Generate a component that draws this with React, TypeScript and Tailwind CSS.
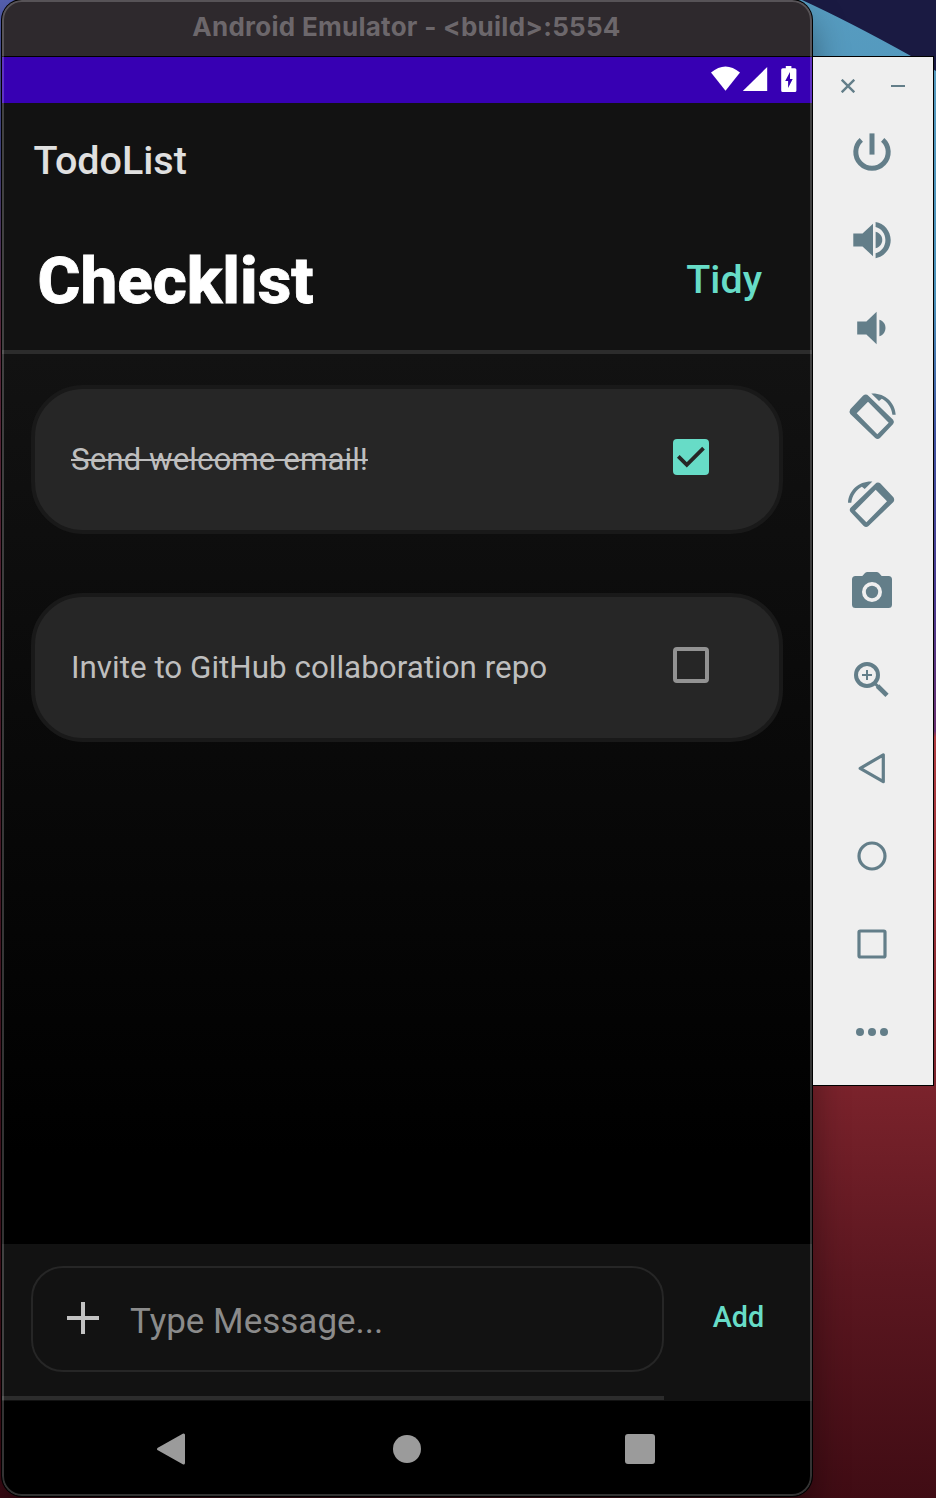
import React from "react";

const ICON = "size-12 overflow-visible";

function Glyph({ children }: { children: React.ReactNode }) {
  return (
    <button className="flex h-[88px] w-full items-center justify-center pr-[2px] text-[#637e89]">
      <svg viewBox="0 0 48 48" className={ICON} fill="currentColor">
        {children}
      </svg>
    </button>
  );
}

function RotateShape() {
  return (
    <>
      <path
        fillRule="evenodd"
        d="M15.2 3.6Q18 1.4 20.6 4L45.1 27.7Q46.8 29.9 45.1 32.1L32 46.1Q29.6 47.8 27.2 46.1L2.3 22Q.7 20 2.3 17.2ZM20 9.7L40.7 30.7L29.3 42.3L8.7 21.3Z"
      />
      <path d="M23.3 1.5C36.5 .8 47 10 47.7 22.7H44.4C43.5 15.5 39.5 9.8 33.8 6.8L31 8.9Z" />
    </>
  );
}

function Toolbar() {
  return (
    <aside className="mt-14 ml-px flex h-[1030px] w-[121px] flex-col border-t border-r border-b border-black bg-[#efefef]">
      <div className="flex h-[51px] shrink-0 items-center gap-9 pt-[7px] pl-7 text-[#637e89]">
        <svg viewBox="0 0 14 14" className="size-3.5" stroke="currentColor" strokeWidth="2.4">
          <path d="M.7.7L13.3 13.3M13.3.7L.7 13.3" />
        </svg>
        <svg viewBox="0 0 14 14" className="size-3.5" stroke="currentColor" strokeWidth="2">
          <path d="M0 7H14" />
        </svg>
      </div>
      <Glyph>
        <path
          d="M13.3 11.8A16.2 16.2 0 1 0 34.7 11.8"
          fill="none"
          stroke="currentColor"
          strokeWidth="5"
        />
        <rect x="21.5" y="5.4" width="5" height="21.2" />
      </Glyph>
      <Glyph>
        <path d="M5.3 17.5H14.5L25 7.8V40.2L14.5 30.6H5.3Z" />
        <path d="M27.6 15.8C36.5 18 36.5 30 27.6 32.3Z" />
        <path d="M27.6 5.9C36 7.2 42.7 14.8 42.7 24S36 40.8 27.6 42.2V37.2C33.5 35.8 37.4 30.5 37.4 24S33.5 12.3 27.6 10.9Z" />
      </Glyph>
      <Glyph>
        <path d="M9.2 17.5H18.4L28.6 7.8V40.2L18.4 30.6H9.2Z" />
        <path d="M31.4 15.8C39.5 18 39.5 30 31.4 32.3Z" />
      </Glyph>
      <Glyph>
        <RotateShape />
      </Glyph>
      <Glyph>
        <g transform="translate(47.7 0) scale(-1 1)">
          <RotateShape />
        </g>
      </Glyph>
      <Glyph>
        <path
          fillRule="evenodd"
          d="M7.5 8H14.3L17 5Q18 4 19.5 4H28.5Q30 4 31 5L33.7 8H40.5Q44 8 44 11.5V36.5Q44 40 40.5 40H7.5Q4 40 4 36.5V11.5Q4 8 7.5 8ZM24 14a10 10 0 1 0 0 20a10 10 0 1 0 0-20Z"
        />
        <circle cx="24" cy="24" r="6.2" />
      </Glyph>
      <Glyph>
        <g fill="none" stroke="currentColor">
          <circle cx="19" cy="19" r="11" strokeWidth="4" />
          <path d="M14 19H24M19 14V24" strokeWidth="2" />
          <path d="M27 27.5L30 30.5" strokeWidth="3" />
          <path d="M29.5 30L39 39.3" strokeWidth="4.6" />
        </g>
      </Glyph>
      <Glyph>
        <path
          d="M12.2 24.3L35.3 10.9V37.7Z"
          fill="none"
          stroke="currentColor"
          strokeWidth="3.2"
          strokeLinejoin="round"
        />
      </Glyph>
      <Glyph>
        <circle cx="24" cy="24" r="13" fill="none" stroke="currentColor" strokeWidth="3.2" />
      </Glyph>
      <Glyph>
        <rect x="11" y="11" width="26" height="26" rx="1.2" fill="none" stroke="currentColor" strokeWidth="3.2" />
      </Glyph>
      <Glyph>
        <circle cx="12" cy="24" r="4" />
        <circle cx="24" cy="24" r="4" />
        <circle cx="36" cy="24" r="4" />
      </Glyph>
    </aside>
  );
}

function Task({ label, done }: { label: string; done?: boolean }) {
  return (
    <li className="flex h-[149px] items-center justify-between rounded-[52px] border-4 border-[#191919] bg-[#262626] pr-[70px] pb-0.5 pl-9">
      <span
        className={
          done
            ? "pt-0.5 text-[31.4px] leading-none text-[#bebebe] line-through decoration-[#bebebe] decoration-2"
            : "pt-0.5 text-[31.4px] leading-none text-[#bebebe]"
        }
      >
        {label}
      </span>
      <svg viewBox="0 0 36 36" className="mb-1 size-9">
        {done ? (
          <>
            <rect width="36" height="36" rx="4" fill="#67dcc7" />
            <path d="M5.3 17.3L13.8 25.8L30.5 9.1" fill="none" stroke="#262626" strokeWidth="3.8" />
          </>
        ) : (
          <rect x="2" y="2" width="32" height="32" rx="2" fill="none" stroke="#929292" strokeWidth="4" />
        )}
      </svg>
    </li>
  );
}

export default function App() {
  return (
    <div className="relative flex h-[1498px] w-[936px] overflow-hidden bg-[#5c1820] font-[Roboto,sans-serif]">
      <svg viewBox="0 0 936 1498" className="absolute inset-0 size-full">
        <defs>
          <linearGradient id="edge" x1="0" y1="0" x2="0" y2="1">
            <stop offset="0" stopColor="#579cc0" />
            <stop offset=".2" stopColor="#4a90b8" />
            <stop offset=".29" stopColor="#4052a0" />
            <stop offset=".4" stopColor="#4a3a90" />
            <stop offset=".488" stopColor="#6a3070" />
            <stop offset=".492" stopColor="#b03c40" />
            <stop offset=".6" stopColor="#9a3238" />
            <stop offset=".72" stopColor="#7c232c" />
            <stop offset=".85" stopColor="#5c1720" />
            <stop offset="1" stopColor="#400c14" />
          </linearGradient>
          <linearGradient id="left" x1="0" y1="0" x2="0" y2="1">
            <stop offset="0" stopColor="#5560b0" />
            <stop offset=".1" stopColor="#4a4c90" />
            <stop offset=".22" stopColor="#6a3048" />
            <stop offset="1" stopColor="#3c0a14" />
          </linearGradient>
        </defs>
        <rect width="936" height="1498" fill="url(#edge)" />
        <rect width="400" height="1498" fill="url(#left)" />
        <path d="M802 0H936V71L911 56Q850 22 802 0Z" fill="#1a1a42" />
      </svg>

      <main className="relative ml-[2px] flex h-[1496px] w-[810px] shrink-0 flex-col overflow-hidden rounded-[20px] bg-black shadow-[0_0_0_1px_#000,0_20px_36px_rgba(0,0,0,0.4)]">
        <header className="flex h-[57px] shrink-0 items-center justify-center border-b border-black bg-[#2e292d] pr-px pb-[3px] font-[Inter,sans-serif] text-[26px] font-bold text-[#6c676b]">
          <span className="tracking-[0.27px]">Android Emulator - &lt;build&gt;:5554</span>
        </header>

        <div className="flex h-[46px] shrink-0 justify-end bg-[#3700b3] pt-[9px] pr-[15px]">
          <svg viewBox="0 0 86 26" className="h-[26px] w-[86px]" fill="#fff">
            <path d="M0 6.5Q14.5-5.7 29 6.5L14.5 24.8Z" />
            <path d="M56.2 1V25H31.8Z" />
            <path
              transform="translate(-.6 0)"
              fillRule="evenodd"
              d="M75.4 0H81V2.3H84.5Q86 2.3 86 3.8V24.5Q86 26 84.5 26H72.3Q70.8 26 70.8 24.5V3.8Q70.8 2.3 72.3 2.3H75.4ZM79.6 6L74.8 15H77.7V22L82.3 12.9H79.6Z"
            />
          </svg>
        </div>

        <div className="flex h-28 shrink-0 items-center bg-[#121212] pt-1 pl-[31.5px] text-[39.5px] font-medium text-[#e0e0e0]">
          TodoList
        </div>
        <div className="flex h-[139px] shrink-0 items-center justify-between border-b-4 border-[#2c2c2c] bg-[#121212] pr-[50px] pb-[3px] pl-[35.5px]">
          <h1 className="text-[65.5px] leading-none font-extrabold text-white [-webkit-text-stroke:0.8px_white]">
            Checklist
          </h1>
          <button className="pb-0.5 text-[39.5px] leading-none font-medium text-[#67dcc7]">Tidy</button>
        </div>

        <ul className="flex h-[890px] shrink-0 flex-col gap-[59px] bg-linear-to-b/srgb from-[#121212] to-black to-90% px-[29px] pt-[31px]">
          <Task label="Send welcome email!" done />
          <Task label="Invite to GitHub collaboration repo" />
        </ul>

        <div className="flex h-[157px] shrink-0 bg-[#121212]">
          <div className="flex h-[156px] w-[662px] flex-col justify-between border-b-4 border-[#2c2c2c] pt-[22px] pb-6 pl-[29px]">
            <div className="flex h-[106px] items-center rounded-[32px] border-2 border-[#262626] pl-[34px]">
              <svg viewBox="0 0 32 32" className="mb-[3px] size-8" stroke="#c2c2c2" strokeWidth="4">
                <path d="M0 16H32M16 0V32" />
              </svg>
              <span className="ml-[31px] pt-[5px] text-[35px] leading-none text-[#8b8b8b]">Type Message...</span>
            </div>
          </div>
          <button className="flex-1 pb-[10px] pl-px text-[28.8px] font-medium text-[#67dcc7]">Add</button>
        </div>

        <nav className="flex h-[95px] items-center bg-black pl-[154px]">
          <svg viewBox="0 0 29 32" className="h-8 w-[29px]">
            <path
              d="M2.6 16L27.5 2V30Z"
              fill="#9b9b9b"
              stroke="#9b9b9b"
              strokeWidth="3"
              strokeLinejoin="round"
            />
          </svg>
          <span className="ml-[208px] size-7 rounded-full bg-[#9b9b9b]" />
          <span className="ml-[204px] size-[30px] rounded-[3px] bg-[#9b9b9b]" />
        </nav>
        <div className="pointer-events-none absolute inset-0 rounded-[20px] border-2 border-white/20" />
      </main>
      <div className="relative">
        <Toolbar />
      </div>
    </div>
  );
}
